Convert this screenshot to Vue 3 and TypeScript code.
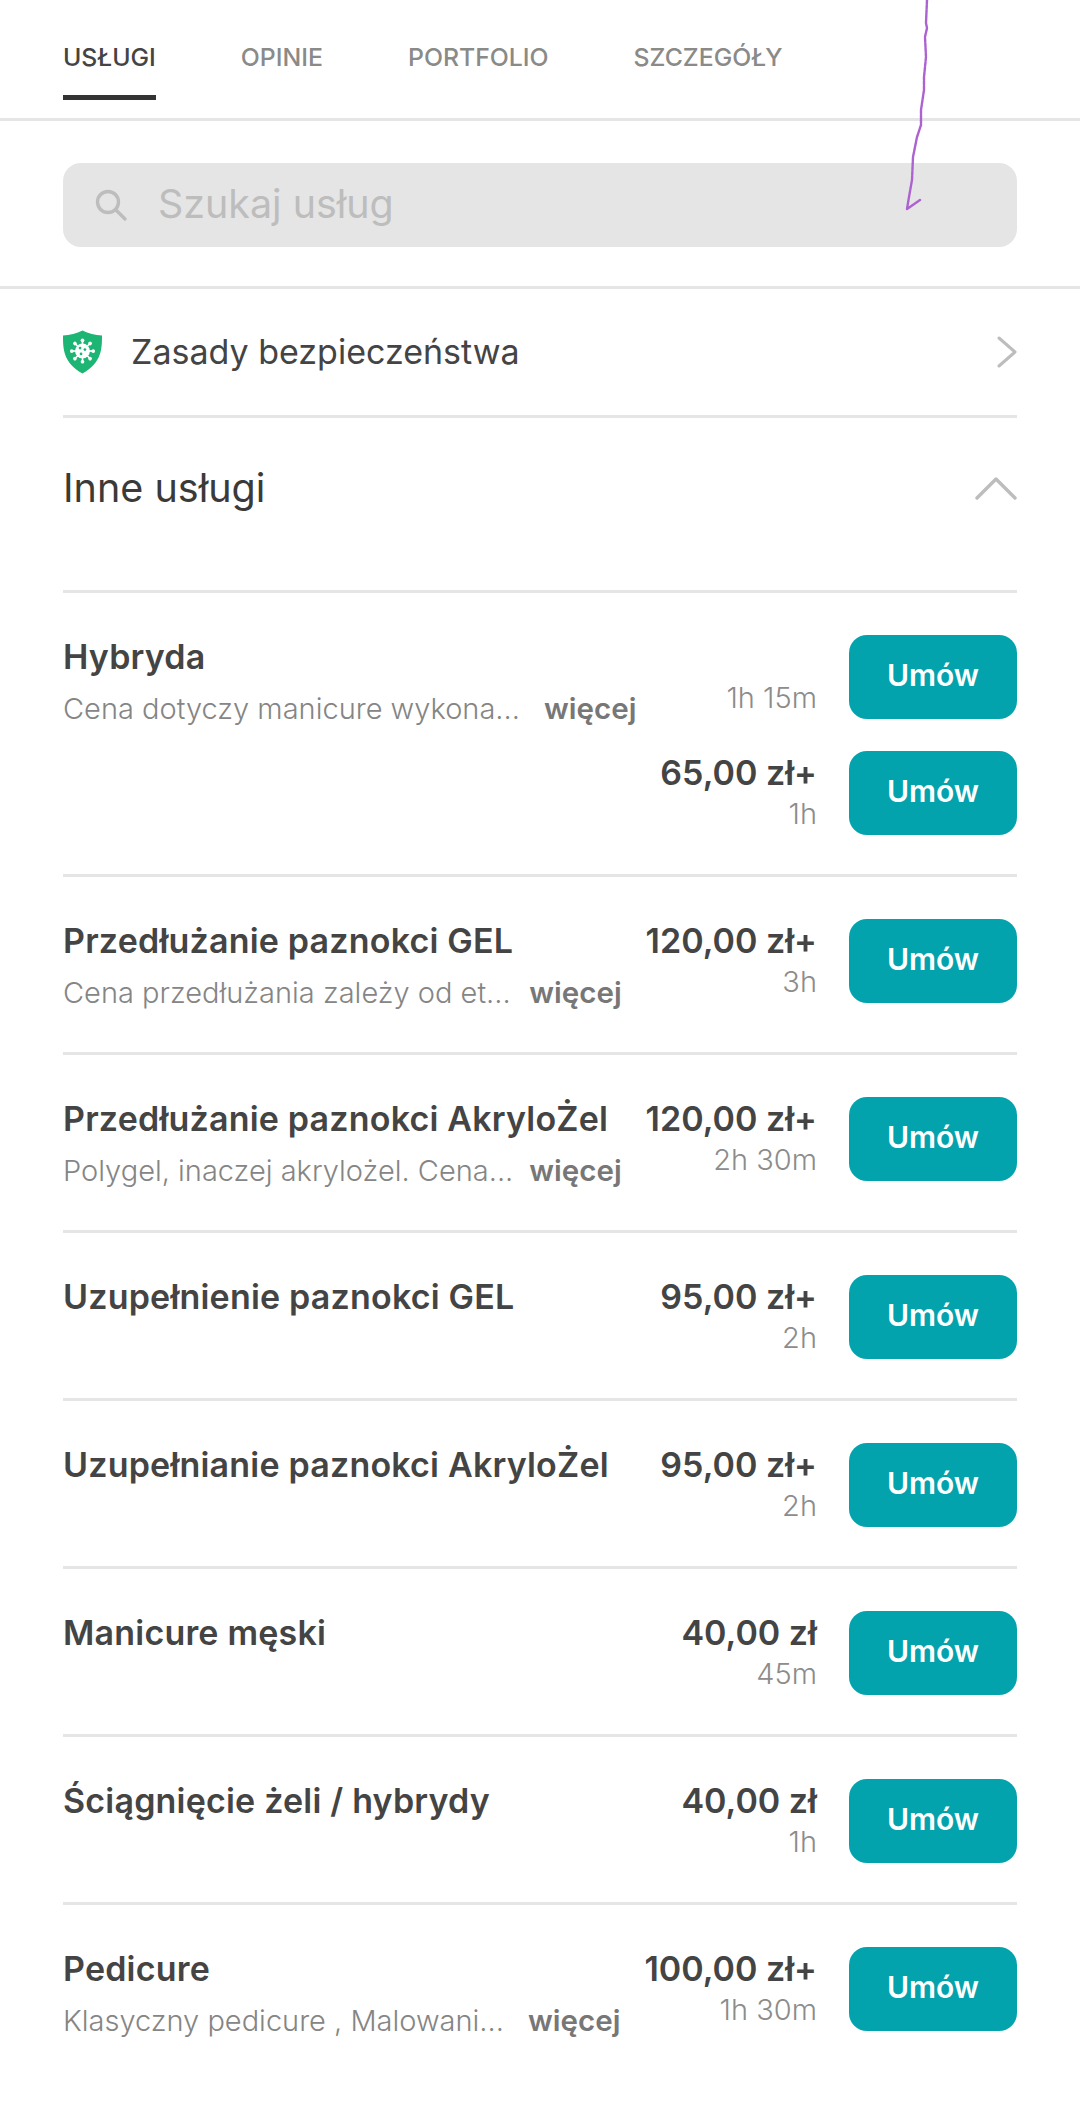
<script setup lang="ts">
interface Variant { price: string; duration: string }
interface Service { name: string; desc?: string; variants: Variant[] }

const tabs = ['USŁUGI', 'OPINIE', 'PORTFOLIO', 'SZCZEGÓŁY']

const spikes = [0, 45, 90, 135, 180, 225, 270, 315]

const services: Service[] = [
  {
    name: 'Hybryda',
    desc: 'Cena dotyczy manicure wykona...',
    variants: [
      { price: '', duration: '1h 15m' },
      { price: '65,00 zł+', duration: '1h' },
    ],
  },
  { name: 'Przedłużanie paznokci GEL', desc: 'Cena przedłużania zależy od et...', variants: [{ price: '120,00 zł+', duration: '3h' }] },
  { name: 'Przedłużanie paznokci AkryloŻel', desc: 'Polygel, inaczej akrylożel. Cena...', variants: [{ price: '120,00 zł+', duration: '2h 30m' }] },
  { name: 'Uzupełnienie paznokci GEL', variants: [{ price: '95,00 zł+', duration: '2h' }] },
  { name: 'Uzupełnianie paznokci AkryloŻel', variants: [{ price: '95,00 zł+', duration: '2h' }] },
  { name: 'Manicure męski', variants: [{ price: '40,00 zł', duration: '45m' }] },
  { name: 'Ściągnięcie żeli / hybrydy', variants: [{ price: '40,00 zł', duration: '1h' }] },
  { name: 'Pedicure', desc: 'Klasyczny pedicure , Malowani...', variants: [{ price: '100,00 zł+', duration: '1h 30m' }] },
]
</script>

<template>
  <div class="page">
    <nav class="tabs">
      <div v-for="(t, i) in tabs" :key="t" class="tab" :class="{ active: i === 0 }">{{ t }}</div>
    </nav>

    <div class="search-wrap">
      <div class="search">
        <svg class="search-icon" viewBox="0 0 34 34" width="34" height="34" fill="none" stroke="#bdbdbd" stroke-width="3.4" stroke-linecap="round">
          <circle cx="14" cy="14" r="10.5" />
          <path d="M22 22 L31 31" />
        </svg>
        <span class="placeholder">Szukaj usług</span>
      </div>
    </div>

    <div class="content">
      <div class="safety">
        <svg class="shield" viewBox="0 0 40 44" width="39" height="44">
          <path d="M20 0 C26 3 33 5 40 5 C40 18 40 33 20 44 C0 33 0 18 0 5 C7 5 14 3 20 0 Z" fill="#1cb573" />
          <g v-for="a in spikes" :key="a" :transform="`rotate(${a} 20 21)`">
            <path d="M20 21 V10.5" stroke="#fff" stroke-width="1.7" />
            <circle cx="20" cy="10" r="1.9" fill="#fff" />
          </g>
          <circle cx="20" cy="21" r="7.6" fill="#fff" />
          <circle cx="17.5" cy="18" r="1.4" fill="#1cb573" />
          <circle cx="22.5" cy="19.5" r="1.4" fill="#1cb573" />
          <circle cx="18.5" cy="24" r="1.4" fill="#1cb573" />
        </svg>
        <span class="safety-text">Zasady bezpieczeństwa</span>
        <svg class="chev-right" viewBox="0 0 20 32" width="20" height="32" fill="none" stroke="#bdbdbd" stroke-width="3" stroke-linecap="round" stroke-linejoin="round">
          <path d="M2 2 L18 16 L2 30" />
        </svg>
      </div>

      <div class="section-head">
        <span class="section-title">Inne usługi</span>
        <svg viewBox="0 0 42 24" width="42" height="24" fill="none" stroke="#bdbdbd" stroke-width="3.4" stroke-linecap="round" stroke-linejoin="round">
          <path d="M2 22 L21 3 L40 22" />
        </svg>
      </div>

      <div v-for="s in services" :key="s.name" class="service">
        <div class="info">
          <div class="name">{{ s.name }}</div>
          <div v-if="s.desc" class="desc-line">
            <span class="desc">{{ s.desc }}</span>
            <span class="more">więcej</span>
          </div>
        </div>
        <div class="variants">
          <div v-for="(v, i) in s.variants" :key="i" class="variant">
            <div class="meta">
              <div class="price">{{ v.price }}</div>
              <div class="duration">{{ v.duration }}</div>
            </div>
            <button class="book">Umów</button>
          </div>
        </div>
      </div>
    </div>

    <svg class="scribble" viewBox="0 0 1080 220" width="1080" height="220" fill="none" stroke="#ad62d2" stroke-width="2.4" stroke-linecap="round" stroke-linejoin="round" stroke-dasharray="4 0.8">
      <path d="M927 0 L926 23 L927 28 L925 37 L926 57 L924 77 L924 90 L921 110 L921 125 L917 137 L913 157 L912 180 L909 197 L907 209 L920 200" />
    </svg>
  </div>
</template>

<style scoped>
.page {
  position: relative;
  width: 1080px;
  height: 2122px;
  overflow: hidden;
  background: #fff;
  font-family: Inter, Lato, sans-serif;
  color: #3f3f3f;
}
.tabs {
  display: flex;
  gap: 85px;
  height: 118px;
  padding: 0 63px;
  border-bottom: 3px solid #e5e5e5;
}
.tab {
  height: 100px;
  line-height: 114px;
  font-size: 24.8px;
  font-weight: 550;
  color: #8a8a88;
}
.tab.active {
  color: #444;
  border-bottom: 5px solid #333;
  height: 95px;
}
.search-wrap {
  padding: 42px 63px 39px;
  border-bottom: 3px solid #e5e5e5;
}
.search {
  display: flex;
  align-items: center;
  height: 84px;
  padding-left: 31px;
  background: #e5e5e5;
  border-radius: 18px;
}
.placeholder {
  margin-left: 30px;
  margin-bottom: 2px;
  font-size: 39.4px;
  font-weight: 400;
  color: #bdbdbd;
}
.content {
  padding: 0 63px;
}
.safety {
  display: flex;
  align-items: center;
  height: 126px;
  border-bottom: 3px solid #e5e5e5;
}
.safety-text {
  flex: 1;
  margin-left: 29px;
  margin-bottom: 2px;
  font-size: 34px;
  font-weight: 400;
  color: #444;
}
.section-head {
  display: flex;
  align-items: center;
  justify-content: space-between;
  height: 172px;
  padding-bottom: 32px;
  box-sizing: border-box;
}
.section-title {
  font-size: 39.5px;
  font-weight: 400;
  color: #3a3a3a;
}
.service {
  display: flex;
  padding: 42px 0 39px;
  border-top: 3px solid #e5e5e5;
}
.info {
  flex: 1;
  min-width: 0;
  padding-right: 24px;
}
.name {
  height: 44px;
  line-height: 43px;
  font-size: 34px;
  font-weight: 600;
  letter-spacing: 0.2px;
  color: #444;
  white-space: nowrap;
}
.desc-line {
  display: flex;
  align-items: center;
  height: 50px;
  padding-top: 8px;
  box-sizing: border-box;
  font-size: 29px;
  white-space: nowrap;
}
.desc {
  flex: 1;
  min-width: 0;
  overflow: hidden;
  font-weight: 300;
  color: #858585;
}
.more {
  font-size: 29.5px;
  font-weight: 600;
  color: #777;
}
.variants {
  display: flex;
  flex-direction: column;
  align-items: flex-end;
  gap: 32px;
}
.variant {
  display: flex;
  gap: 32px;
}
.meta {
  text-align: right;
}
.price {
  height: 44px;
  line-height: 43px;
  font-size: 34px;
  font-weight: 600;
  color: #444;
  white-space: nowrap;
}
.duration {
  height: 40px;
  line-height: 38px;
  font-size: 29px;
  font-weight: 300;
  color: #8c8c8c;
  white-space: nowrap;
}
.book {
  width: 168px;
  height: 84px;
  border: none;
  border-radius: 18px;
  background: #03a3ae;
  color: #fff;
  font-family: inherit;
  font-size: 30px;
  font-weight: 600;
  padding: 0 0 4px;
}
.scribble {
  position: absolute;
  top: 0;
  left: 0;
  pointer-events: none;
}
</style>
